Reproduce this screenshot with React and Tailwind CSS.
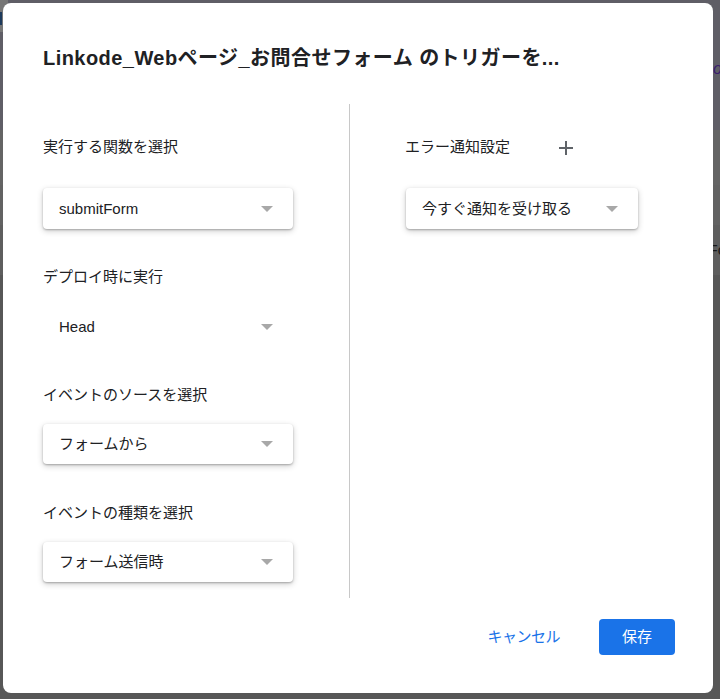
import React from "react";

const jp = { fontFamily: '"Liberation Sans", "Noto Sans CJK JP", sans-serif' };

function Caret() {
  return (
    <svg width="12" height="6" viewBox="0 0 12 6" className="shrink-0">
      <path d="M0 0 L12 0 L6 6 Z" fill="#a8a8a8" />
    </svg>
  );
}

function SelectBox({ value, width = "w-[250px]", flat = false, h = "h-[41px]" }) {
  return (
    <div
      className={`${width} ${h} flex items-center justify-between pl-4 pr-5 rounded-[4px] bg-white ${
        flat ? "" : "shadow-[0_1px_2px_rgba(0,0,0,0.25),0_2px_6px_rgba(0,0,0,0.2)]"
      }`}
    >
      <span className="text-[15px] leading-5 text-[#202124]">{value}</span>
      <Caret />
    </div>
  );
}

function Label({ children }) {
  return <div className="text-[15px] leading-5 text-[#202124] whitespace-nowrap">{children}</div>;
}

export default function App() {
  return (
    <div className="relative w-[720px] h-[699px] overflow-hidden bg-[#575757]" style={jp}>
      {/* page content under the overlay */}
      <div className="flex flex-col w-full h-full">
        <div className="h-[130px] bg-[#5f5e66] flex">
          <div className="w-[8px] h-[32px] bg-[#767676] flex flex-col pt-[12px]">
            <div className="w-[2px] h-[13px] bg-[#1d3a5c]" />
          </div>
        </div>
        <div className="h-[55px] bg-[#646464]" />
        <div className="h-[40px] bg-[#626262]" />
        <div className="h-[50px] bg-[#5e5e5e] flex justify-end items-center">
          <span className="text-[15px] text-[#1a1a1a] mr-[-6px]">Fo</span>
        </div>
        <div className="flex-1 bg-[#575757]" />
      </div>
      <div className="absolute left-[713px] top-[57px] text-[16px] italic text-[#3a1d6e]">o</div>

      {/* dialog */}
      <div className="absolute left-[3px] top-[3px] w-[710px] h-[690px] bg-white rounded-[8px] flex flex-col">
        <div className="pl-[40px] pt-[41px] h-[101px]">
          <div className="text-[20px] leading-7 font-bold text-[#202124] whitespace-nowrap tracking-[0.45px]">
            Linkode_Webページ_お問合せフォーム のトリガーを...
          </div>
        </div>

        <div className="flex h-[494px]">
          {/* left column */}
          <div className="w-[346px] pl-[40px] flex flex-col pt-[33px]">
            <Label>実行する関数を選択</Label>
            <div className="mt-[31px]">
              <SelectBox value="submitForm" />
            </div>
            <div className="mt-[38px]">
              <Label>デプロイ時に実行</Label>
            </div>
            <div className="mt-[19px]">
              <SelectBox value="Head" flat />
            </div>
            <div className="mt-[38px]">
              <Label>イベントのソースを選択</Label>
            </div>
            <div className="mt-[19px]">
              <SelectBox value="フォームから" h="h-[40px]" />
            </div>
            <div className="mt-[39px]">
              <Label>イベントの種類を選択</Label>
            </div>
            <div className="mt-[19px]">
              <SelectBox value="フォーム送信時" h="h-[40px]" />
            </div>
          </div>

          <div className="w-px bg-[#c8c8c8]" />

          {/* right column */}
          <div className="flex-1 pl-[55px] flex flex-col pt-[33px]">
            <div className="flex items-center h-5">
              <Label>エラー通知設定</Label>
              <svg width="16" height="16" viewBox="0 0 16 16" className="ml-[48px] mt-[2px]">
                <path d="M8 1 V15 M1 8 H15" stroke="#5f6368" strokeWidth="2" />
              </svg>
            </div>
            <div className="mt-[31px] ml-px">
              <SelectBox value="今すぐ通知を受け取る" width="w-[232px]" />
            </div>
          </div>
        </div>

        <div className="flex-1 flex items-start justify-end pr-[38px] pt-[21px]">
          <div className="h-9 flex items-center mr-[39px] text-[15px] text-[#1a73e8] tracking-[-0.5px]">キャンセル</div>
          <div className="w-[76px] h-9 rounded-[4px] bg-[#1a73e8] flex items-center justify-center text-[15px] text-white">
            保存
          </div>
        </div>
      </div>
    </div>
  );
}
